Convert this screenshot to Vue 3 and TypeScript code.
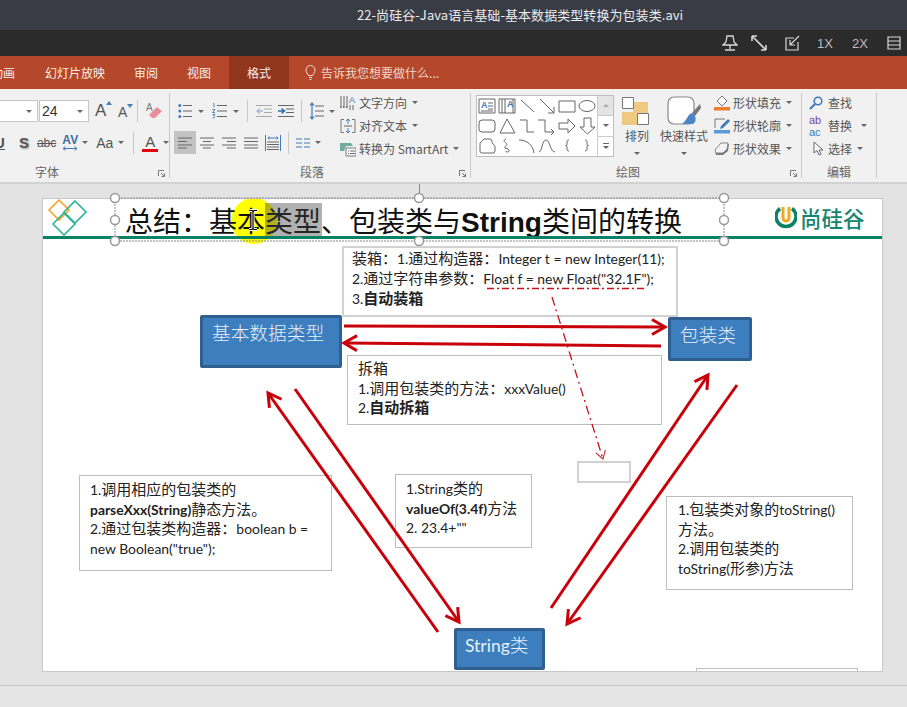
<script setup lang="ts">
interface Arrow { x1: number; y1: number; x2: number; y2: number }
const arrows: Arrow[] = [
  { x1: 344, y1: 326, x2: 665, y2: 327 },
  { x1: 661, y1: 346, x2: 344, y2: 343 },
  { x1: 438, y1: 632, x2: 268, y2: 393 },
  { x1: 295, y1: 389, x2: 459, y2: 622 },
  { x1: 551, y1: 608, x2: 708, y2: 375 },
  { x1: 737, y1: 385, x2: 567, y2: 624 },
]
const handles: [number, number][] = [
  [115, 198], [419, 198], [724, 198],
  [115, 220], [724, 220],
  [115, 241], [419, 241], [724, 241],
]
const shapes: string[] = [
  'M2 3h16v14H2z M11 7h5 M11 10h5 M11 13h5 M4 15h12',
  'M2 3h16v14H2z M5 3v14 M8 3v14 M16 3v14',
  'M4 4L17 16',
  'M3 3L17 17 M17 11v6h-6',
  'M2 5h16v11H2z',
  'M2 10a8 5.5 0 1 0 16 0a8 5.5 0 1 0-16 0z',
  'M5 4h10a3 3 0 0 1 3 3v6a3 3 0 0 1-3 3H5a3 3 0 0 1-3-3V7a3 3 0 0 1 3-3z',
  'M10 3L18 17H3z',
  'M3 4h7v12h7',
  'M1 4h7v12h9 M14 13l3 3l-3 3',
  'M2 7h9V3l7 7l-7 7v-4H2z',
  'M7 2h7v9h4l-7.500 7L3 11h4z',
  'M7 3h6c3 0 1 4 3 5c2 1 2 2 2 4v3a2 2 0 0 1-2 2H5a2 2 0 0 1-2-2V7z',
  'M9 3c-3 1-2 3 0 4c3 2-2 3-1 5c1 1 3 0 4 2c1 2-3 3-3 1',
  'M2 4c8 0 14 5 15 13',
  'M2 16c3 0 3-12 7-12c4 0 4 12 9 12',
  'M12 4c-2 0-2 1-2 2v2c0 1-.5 1.500-1.500 1.500c1 0 1.500.5 1.500 1.500v2c0 1 0 2 2 2',
  'M8 4c2 0 2 1 2 2v2c0 1 .5 1.500 1.500 1.500c-1 0-1.500.5-1.500 1.500v2c0 1 0 2-2 2',
]
</script>

<template>
  <div class="app">
    <div class="titlebar">22-尚硅谷-Java语言基础-基本数据类型转换为包装类.avi</div>

    <div class="playerbar">
      <svg class="pb-i" width="16" height="18" viewBox="0 0 16 18"><path d="M5 2h6l1 6l3 3H1l3-3z M8 11v4 M3 16h10" fill="none" stroke="#d8d8d8" stroke-width="1.300"/></svg>
      <svg class="pb-e" width="18" height="16" viewBox="0 0 18 16"><path d="M3 2l12 12 M2 1h5M2 1v5 M16 15h-5M16 15v-5" fill="none" stroke="#d8d8d8" stroke-width="1.600"/></svg>
      <svg class="pb-c" width="16" height="16" viewBox="0 0 16 16"><path d="M10 3H2v12h12V7 M15 1L6 10 M6 5v5h5" fill="none" stroke="#d8d8d8" stroke-width="1.200"/></svg>
      <span class="pb-t1">1X</span>
      <span class="pb-t2">2X</span>
      <svg class="pb-l" width="14" height="14" viewBox="0 0 14 14"><path d="M1 1h12v12H1z M1 5h12 M1 9h12" fill="none" stroke="#d8d8d8" stroke-width="1.200"/></svg>
    </div>

    <div class="tabs">
      <span class="tab t0">动画</span>
      <span class="tab t1">幻灯片放映</span>
      <span class="tab t2">审阅</span>
      <span class="tab t2">视图</span>
      <span class="tab active">格式</span>
      <svg class="bulb" width="11" height="15" viewBox="0 0 11 15"><path d="M3.500 10.500C2.500 8.500 1 7.500 1 5a4.500 4.500 0 0 1 9 0c0 2.500-1.500 3.500-2.500 5.500z M4 12.500h3 M4.500 14.500h2" fill="none" stroke="#f3dcd4" stroke-width="1"/></svg>
      <span class="tab tell">告诉我您想要做什么...</span>
    </div>

    <div class="ribbon">
      <section class="group g-font">
        <div class="body">
          <div class="row r1">
            <div class="combo c1"><i class="caret"></i></div>
            <div class="combo c2"><span>24</span><i class="caret"></i></div>
            <span class="ico a-up">A<svg width="6" height="4" viewBox="0 0 6 4"><path d="M0 4L3 0L6 4z" fill="#4a7fb5"/></svg></span>
            <span class="ico a-dn">A<svg width="6" height="4" viewBox="0 0 6 4"><path d="M0 0L3 4L6 0z" fill="#4a7fb5"/></svg></span>
            <i class="vsep s-a"></i>
            <svg class="eraser" width="17" height="18" viewBox="0 0 17 18"><text x="0" y="9" font-size="10" fill="#777" font-family="Liberation Sans">A</text><path d="M3 13L11 5l5 4l-7 7H6z" fill="#ea8e9c"/></svg>
          </div>
          <div class="row r2">
            <span class="u">U</span>
            <span class="s">S</span>
            <span class="abc">abc</span>
            <span class="av">AV<svg width="16" height="5" viewBox="0 0 16 5"><path d="M1 2.500h14 M3.500 0.500L1 2.500l2.500 2 M12.500 0.500l2.500 2l-2.500 2" fill="none" stroke="#3f7ab8" stroke-width="1"/></svg></span>
            <i class="caret cr1"></i>
            <span class="aa">Aa</span>
            <i class="caret cr2"></i>
            <i class="vsep s-b"></i>
            <span class="red-a">A</span>
            <i class="caret cr3"></i>
          </div>
        </div>
        <div class="label l-font">字体</div>
        <svg class="launcher" width="7" height="7" viewBox="0 0 7 7"><path d="M0.500 6V0.500H6 M3 3l3.500 3.500 M6.500 3.500v3h-3" fill="none" stroke="#777" stroke-width="1"/></svg>
      </section>

      <section class="group g-para">
        <div class="body para-body">
          <div class="para-left">
            <div class="row r1">
              <svg class="p-bul" width="14" height="16" viewBox="0 0 14 16"><path d="M5 2.500h9 M5 8h9 M5 13.500h9" stroke="#666"/><circle cx="1.800" cy="2.500" r="1.500" fill="#3f7ab8"/><circle cx="1.800" cy="8" r="1.500" fill="#3f7ab8"/><circle cx="1.800" cy="13.500" r="1.500" fill="#3f7ab8"/></svg>
              <i class="caret p-c1"></i>
              <svg class="p-num" width="15" height="16" viewBox="0 0 15 16"><path d="M5 2.500h10 M5 8h10 M5 13.500h10" stroke="#666"/><path d="M1 1l1-.5v4 M.5 6.500h2.500l-2.500 3h2.500 M.5 11.500h2.500l-1.500 1.500c1.500 0 1.500 2.500-1 2" fill="none" stroke="#3f7ab8" stroke-width=".9"/></svg>
              <i class="caret p-c2"></i>
              <i class="vsep p-s1"></i>
              <svg class="p-dec" width="17" height="14" viewBox="0 0 17 14"><path d="M0 1.500h16 M8 5h8 M8 8.500h8 M0 12.500h16" stroke="#aaa"/><path d="M7 7H1 M4 4.500L1 7l3 2.500" fill="none" stroke="#a6bcd4" stroke-width="1.300"/></svg>
              <svg class="p-inc" width="17" height="14" viewBox="0 0 17 14"><path d="M0 1.500h16 M8 5h8 M8 8.500h8 M0 12.500h16" stroke="#666"/><path d="M0 7h6 M3.500 4.500L6.500 7l-3 2.500" fill="none" stroke="#2d6cab" stroke-width="1.500"/></svg>
              <i class="vsep p-s2"></i>
              <svg class="p-ls" width="15" height="18" viewBox="0 0 15 18"><path d="M6 4h9 M6 9h9 M6 14h9" stroke="#666"/><path d="M3 1v16 M1 3.500L3 1l2 2.500 M1 14.500L3 17l2-2.500" fill="none" stroke="#3f7ab8" stroke-width="1.200"/></svg>
              <i class="caret p-c3"></i>
            </div>
            <div class="row r2">
              <div class="sel-align"><svg width="14" height="12" viewBox="0 0 14 12"><path d="M0 1h14 M0 4.500h9 M0 8h14 M0 11h9" stroke="#666"/></svg></div>
              <svg class="al1" width="14" height="12" viewBox="0 0 14 12"><path d="M0 1h14 M3 4.500h8 M0 8h14 M3 11h8" stroke="#666"/></svg>
              <svg class="al2" width="14" height="12" viewBox="0 0 14 12"><path d="M0 1h14 M5 4.500h9 M0 8h14 M5 11h9" stroke="#666"/></svg>
              <svg class="al3" width="14" height="12" viewBox="0 0 14 12"><path d="M0 1h14 M0 4.500h14 M0 8h14 M0 11h14" stroke="#666"/></svg>
              <svg class="al4" width="16" height="16" viewBox="0 0 16 16"><path d="M.5 0v16 M15.500 0v16" stroke="#3f7ab8"/><path d="M3 3h10 M4.500 1.500L3 3l1.500 1.500 M11.500 1.500L13 3l-1.500 1.500" fill="none" stroke="#3f7ab8"/><path d="M2 7h12 M2 9.500h12 M2 12h12 M2 14.500h12" stroke="#666"/></svg>
              <i class="vsep p-s3"></i>
              <svg class="al5" width="14" height="10" viewBox="0 0 14 10"><path d="M0 1h6 M8 1h6 M0 5h6 M8 5h6 M0 9h6 M8 9h6" stroke="#3f7ab8" stroke-width="1.100"/></svg>
              <i class="caret p-c4"></i>
            </div>
          </div>
          <div class="txt-col">
            <div class="txt-row">
              <svg width="16" height="16" viewBox="0 0 16 16"><path d="M1 1v12 M4 1v12 M7 1v12 M1 13l-1-2 M4 13l-1-2 M7 13l-1-2" fill="none" stroke="#666"/><text x="9" y="8" font-size="9" fill="#3f7ab8" font-family="Liberation Sans">A</text><path d="M10 10v5 M13 10v5" stroke="#666"/></svg>
              <span class="rt">文字方向</span><i class="caret"></i>
            </div>
            <div class="txt-row">
              <svg width="16" height="16" viewBox="0 0 16 16"><path d="M4 1.500H1v13h3 M12 1.500h3v13h-3" fill="none" stroke="#777"/><path d="M8 1v5 M6 3l2-2l2 2 M8 15v-5 M6 13l2 2l2-2" fill="none" stroke="#3f7ab8"/><path d="M4 8h8" stroke="#666"/></svg>
              <span class="rt">对齐文本</span><i class="caret"></i>
            </div>
            <div class="txt-row">
              <svg width="16" height="16" viewBox="0 0 16 16"><path d="M0 2h11l2 3H6l-2 5H0z" fill="#6fae9b"/><path d="M6 7h10v8H6z" fill="#fff" stroke="#777"/><path d="M8 10h1 M8 12.500h1 M10 10h5 M10 12.500h5" stroke="#666"/></svg>
              <span class="rt">转换为 SmartArt</span><i class="caret"></i>
            </div>
          </div>
        </div>
        <div class="label l-para">段落</div>
        <svg class="launcher" width="7" height="7" viewBox="0 0 7 7"><path d="M0.500 6V0.500H6 M3 3l3.500 3.500 M6.500 3.500v3h-3" fill="none" stroke="#777" stroke-width="1"/></svg>
      </section>

      <section class="group g-draw">
        <div class="body draw-body">
          <div class="gallery">
            <div class="shape-grid">
              <svg v-for="(d, i) in shapes" :key="i" class="shape" width="20" height="20" viewBox="0 0 20 20"><path :d="d" fill="none" stroke="#666" stroke-width="1"/><text v-if="i === 0" x="4" y="12" font-size="9" font-weight="700" fill="#3f7ab8" font-family="Liberation Sans">A</text><text v-if="i === 1" x="10" y="11" font-size="9" font-weight="700" fill="#3f7ab8" font-family="Liberation Sans">A</text></svg>
            </div>
            <div class="gal-btns">
              <div class="gb off"><i class="tri-up"></i></div>
              <div class="gb"><i class="caret"></i></div>
              <div class="gb"><i class="more"></i><i class="caret"></i></div>
            </div>
          </div>
          <div class="big b-arr">
            <svg width="30" height="28" viewBox="0 0 30 28"><path d="M11 5h15v14H11z M0 15h15v13H0z" fill="#efc982"/><path d="M.5.500h11v11H.500z M15.500 16.500h11v11h-11z" fill="#fff" stroke="#777"/></svg>
            <span class="bt">排列</span><i class="caret"></i>
          </div>
          <div class="big b-quick">
            <svg width="34" height="30" viewBox="0 0 34 30"><rect x="1" y="1" width="26" height="27" rx="6" fill="#fff" stroke="#888" stroke-width="1.200"/><path d="M33 8l-8 9l3 3l6-8z" fill="#777"/><path d="M25 17c-5 2-4 6-10 11h11c3-2 3-5 2-8z" fill="#4a86c5"/></svg>
            <span class="bt">快速样式</span><i class="caret"></i>
          </div>
          <div class="txt-col fx-col">
            <div class="txt-row">
              <svg width="16" height="16" viewBox="0 0 16 16"><path d="M8 1l5 5l-5 5l-5-5z" fill="#fff" stroke="#777"/><path d="M0 12h16v3.500H0z" fill="#ed7d31"/></svg>
              <span class="rt">形状填充</span><i class="caret"></i>
            </div>
            <div class="txt-row">
              <svg width="16" height="16" viewBox="0 0 16 16"><path d="M1 10V1h10" fill="none" stroke="#777"/><path d="M14 1l2 2l-7 7l-3 1l1-3z" fill="#3f7ab8"/><path d="M0 12h16v3.500H0z" fill="#5b9bd5"/></svg>
              <span class="rt">形状轮廓</span><i class="caret"></i>
            </div>
            <div class="txt-row">
              <svg width="16" height="16" viewBox="0 0 16 16"><path d="M1 10L7 3h8l-1 7l-5 4H2z" fill="#777"/><path d="M1 9L7 2h7l-1 6l-4 4H2z" fill="#f4f4f4" stroke="#888"/></svg>
              <span class="rt">形状效果</span><i class="caret"></i>
            </div>
          </div>
        </div>
        <div class="label l-draw">绘图</div>
        <svg class="launcher" width="7" height="7" viewBox="0 0 7 7"><path d="M0.500 6V0.500H6 M3 3l3.500 3.500 M6.500 3.500v3h-3" fill="none" stroke="#777" stroke-width="1"/></svg>
      </section>

      <section class="group g-edit">
        <div class="body">
          <div class="txt-col edit-col">
            <div class="txt-row">
              <svg width="14" height="14" viewBox="0 0 14 14"><circle cx="9" cy="5" r="3.800" fill="none" stroke="#3f7ab8" stroke-width="1.600"/><path d="M6 8L1 13" stroke="#3f7ab8" stroke-width="2.200"/></svg>
              <span class="rt e-t">查找</span>
            </div>
            <div class="txt-row">
              <span class="abac"><b>ab</b><em>ac</em></span>
              <span class="rt e-t2">替换</span><i class="caret e-c1"></i>
            </div>
            <div class="txt-row">
              <svg class="e-cur" width="11" height="15" viewBox="0 0 11 15"><path d="M1 1v11l3-2.500l2 4.500l2-1l-2-4h4z" fill="#fff" stroke="#666"/></svg>
              <span class="rt e-t3">选择</span><i class="caret"></i>
            </div>
          </div>
        </div>
        <div class="label l-edit">编辑</div>
      </section>
    </div>

    <div class="workspace">
      <div class="slide">
        <div class="spot"></div>
        <svg class="logo" width="44" height="38" viewBox="0 0 44 38"><path d="M14 2l10 10l-10 10L4 12z" fill="none" stroke="#f5a623" stroke-width="1.600"/><path d="M30 4l11 11l-11 11l-11-11z M19 16l11 11l-11 11L8 27z" fill="none" stroke="#2bb39a" stroke-width="1.600" transform="translate(0 -1)"/></svg>
        <div class="slide-title">总结：基本类型、包装类与<b>String</b>类间的转换</div>
        <div class="selection"></div>
        <svg class="ibeam" width="10" height="22" viewBox="0 0 10 22"><path d="M1 1.500h3l1 1l1-1h3 M5 2.500v17 M1 20.500h3l1-1l1 1h3" fill="none" stroke="#fff" stroke-width="3"/><path d="M1 1.500h3l1 1l1-1h3 M5 2.500v17 M1 20.500h3l1-1l1 1h3" fill="none" stroke="#000" stroke-width="1.200"/></svg>
        <div class="brand">
          <svg width="22" height="24" viewBox="0 0 22 24"><path d="M5 2.500a10 10 0 1 0 12 0" fill="none" stroke="#0b8265" stroke-width="3.500"/><path d="M8 1v11a3 3 0 0 0 6 0V1" fill="none" stroke="#f0a81e" stroke-width="3"/></svg>
          <span>尚硅谷</span>
        </div>
        <div class="rule"></div>

        <div class="tb tb-box">
          <span class="ln">装箱：<span class="en">1.</span>通过构造器：<span class="en">Integer t = new Integer(11);</span></span>
          <span class="ln"><span class="en">2.</span>通过字符串参数：<span class="en">Float f = new Float("32.1F");</span></span>
          <span class="ln"><span class="en">3.</span><b>自动装箱</b></span>
        </div>
        <div class="tb tb-unbox">
          <span class="ln">拆箱</span>
          <span class="ln"><span class="en">1.</span>调用包装类的方法：<span class="en">xxxValue()</span></span>
          <span class="ln"><span class="en">2.</span><b>自动拆箱</b></span>
        </div>
        <div class="tb tb-left">
          <span class="ln"><span class="en">1.</span>调用相应的包装类的</span>
          <span class="ln"><b class="en">parseXxx(String)</b>静态方法。</span>
          <span class="ln"><span class="en">2.</span>通过包装类构造器：<span class="en">boolean b =</span></span>
          <span class="ln"><span class="en">new Boolean("true");</span></span>
        </div>
        <div class="tb tb-mid">
          <span class="ln"><span class="en">1.String</span>类的</span>
          <span class="ln"><b class="en">valueOf(3.4f)</b>方法</span>
          <span class="ln"><span class="en">2. 23.4+""</span></span>
        </div>
        <div class="tb tb-right">
          <span class="ln"><span class="en">1.</span>包装类对象的<span class="en">toString()</span></span>
          <span class="ln">方法。</span>
          <span class="ln"><span class="en">2.</span>调用包装类的</span>
          <span class="ln"><span class="en">toString(</span>形参<span class="en">)</span>方法</span>
        </div>
        <div class="tb tb-small"></div>
        <div class="tb tb-cut"></div>

        <div class="node n-basic">基本数据类型</div>
        <div class="node n-wrap">包装类</div>
        <div class="node n-str"><span class="str-en">String</span>类</div>

        <svg class="flow" width="841" height="474" viewBox="42 198 841 474">
          <defs>
            <marker id="head" markerUnits="userSpaceOnUse" markerWidth="18" markerHeight="20" refX="15" refY="9" orient="auto"><path d="M2 1.500L15 9L2 16.500" fill="none" stroke="#c8000a" stroke-width="3"/></marker>
            <marker id="thin" markerUnits="userSpaceOnUse" markerWidth="12" markerHeight="12" refX="9" refY="6" orient="auto"><path d="M1 1L9 6L1 11" fill="none" stroke="#c0202a" stroke-width="1"/></marker>
          </defs>
          <line v-for="(a, i) in arrows" :key="i" :x1="a.x1" :y1="a.y1" :x2="a.x2" :y2="a.y2" stroke="#c8000a" stroke-width="3" marker-end="url(#head)"/>
          <path d="M487 288.500H646" fill="none" stroke="#c8101a" stroke-width="1.300" stroke-dasharray="7 3 2 3"/>
          <path d="M552 297L603 459" fill="none" stroke="#c8101a" stroke-width="1.300" stroke-dasharray="9 4 2 4" marker-end="url(#thin)"/>
        </svg>
      </div>

      <svg class="frame" width="907" height="60" viewBox="0 184 907 60">
        <path d="M115 198H724V241H115z" fill="none" stroke="#888" stroke-width="1" stroke-dasharray="2 1"/>
        <path d="M419.500 184V198" stroke="#888"/>
        <circle v-for="(h, i) in handles" :key="i" :cx="h[0]" :cy="h[1]" r="4.500" fill="#fff" stroke="#999" stroke-width="1.500"/>
      </svg>
    </div>

    <div class="statusbar"></div>
  </div>
</template>

<style>
html, body { margin: 0; background: #e3e3e3; }
</style>

<style scoped>
.app { width: 907px; height: 707px; overflow: hidden; font-family: "Noto Sans CJK SC", "Liberation Sans", sans-serif; color: #444; }
.titlebar { height: 30px; background: #393c45; color: #ececec; font-size: 13px; line-height: 30px; padding-left: 357px; box-sizing: border-box; white-space: nowrap; letter-spacing: .06px; }
.playerbar { height: 26px; background: #2b2b2b; display: flex; align-items: center; justify-content: flex-end; padding-right: 6px; color: #bdbdbd; font: 13px "Liberation Sans", sans-serif; }
.pb-e { margin-left: 12px; }
.pb-c { margin-left: 16px; }
.pb-t1 { margin-left: 17px; width: 17px; }
.pb-t2 { margin-left: 18px; width: 17px; }
.pb-l { margin-left: 18px; }

.tabs { height: 33px; background: #b5472a; display: flex; align-items: center; color: #fbeee9; font-size: 12px; white-space: nowrap; }
.tab { line-height: 33px; }
.t0 { margin-left: -9px; }
.t1 { margin-left: 30px; }
.t2 { margin-left: 29px; }
.active { margin-left: 18px; width: 60px; text-align: center; background: #90361f; }
.bulb { margin-left: 16px; }
.tell { margin-left: 5px; color: #f2d5cb; }

.ribbon { height: 85px; padding: 4px 0; background: #f1f1f1; border-bottom: 2px solid #d2d2d2; display: flex; font-size: 12px; }
.group { position: relative; box-sizing: border-box; border-right: 1px solid #c8c8c8; display: flex; flex-direction: column; }
.g-font { width: 170px; }
.g-para { width: 301px; }
.g-draw { width: 331px; }
.g-edit { width: 75px; }
.body { height: 72px; }
.label { height: 13px; line-height: 14px; color: #666; }
.l-font { margin-left: 35px; }
.l-para { margin-left: 130px; }
.l-draw { margin-left: 145px; }
.l-edit { margin-left: 25px; }
.launcher { position: absolute; right: 4px; bottom: 1px; }

.row { display: flex; align-items: center; }
.r1 { height: 22px; margin-top: 7px; }
.r2 { height: 23px; margin-top: 9px; }
.combo { box-sizing: border-box; height: 22px; background: #fff; border: 1px solid #c6c6c6; display: flex; align-items: center; justify-content: flex-end; padding-right: 5px; }
.c1 { width: 39px; margin-left: -1px; margin-right: 1px; }
.c2 { width: 50px; justify-content: space-between; padding-left: 2px; font: 14px "Liberation Sans", sans-serif; color: #333; }
.caret { display: inline-block; width: 0; height: 0; flex: none; border-left: 3px solid transparent; border-right: 3px solid transparent; border-top: 3px solid #666; }
.ico { display: flex; align-items: flex-start; font: 16px "Liberation Sans", sans-serif; color: #555; }
.a-up { margin-left: 6px; width: 21px; font-size: 17px; }
.a-dn { margin-left: 2px; width: 19px; font-size: 14px; padding-top: 2px; }
.vsep { display: block; flex: none; width: 1px; height: 22px; background: #c9c9c9; }
.eraser { margin-left: 8px; }
.u, .s, .abc, .av, .aa, .red-a { font-family: "Liberation Sans", sans-serif; color: #555; }
.u { width: 5px; font-size: 15px; font-weight: 700; text-decoration: underline; direction: rtl; overflow: hidden; }
.s { margin-left: 14px; font-size: 15px; font-weight: 700; text-shadow: 1px 1px 2px #999; }
.abc { margin-left: 8px; font-size: 12px; text-decoration: line-through; }
.av { margin-left: 6px; font-size: 12px; font-weight: 700; line-height: 12px; display: flex; flex-direction: column; align-items: center; color: #3f6f9f; }
.cr1 { margin-left: 4px; }
.aa { margin-left: 8px; font-size: 14px; }
.cr2 { margin-left: 5px; }
.s-b { margin-left: 9px; }
.red-a { margin-left: 8px; width: 16px; font-size: 15px; text-align: center; line-height: 15px; border-bottom: 3px solid #e8000b; }
.cr3 { margin-left: 5px; }

.para-body { display: flex; }
.para-left { width: 170px; }
.p-bul { margin-left: 8px; }
.p-c1 { margin-left: 6px; }
.p-num { margin-left: 8px; }
.p-c2 { margin-left: 6px; }
.p-s1 { margin-left: 8px; }
.p-dec { margin-left: 8px; }
.p-inc { margin-left: 5px; }
.p-s2 { margin-left: 6px; }
.p-ls { margin-left: 7px; }
.p-c3 { margin-left: 5px; }
.sel-align { box-sizing: border-box; margin-left: 4px; width: 22px; height: 23px; background: #c3c3c3; display: flex; align-items: center; justify-content: center; }
.al1 { margin-left: 4px; }
.al2 { margin-left: 8px; }
.al3 { margin-left: 8px; }
.al4 { margin-left: 7px; }
.p-s3 { margin-left: 7px; }
.al5 { margin-left: 7px; }
.p-c4 { margin-left: 5px; }

.txt-col { display: flex; flex-direction: column; margin-top: -2px; }
.txt-row { height: 23px; display: flex; align-items: center; white-space: nowrap; }
.txt-row .rt { margin-left: 3px; margin-right: 5px; font-size: 12px; color: #555; }

.draw-body { display: flex; }
.gallery { box-sizing: border-box; margin: 2px 0 0 5px; width: 138px; height: 62px; border: 1px solid #bdbdbd; background: #fff; display: flex; }
.shape-grid { width: 120px; display: grid; grid-template-columns: repeat(6, 20px); grid-auto-rows: 20px; }
.gal-btns { width: 16px; border-left: 1px solid #ccc; display: flex; flex-direction: column; }
.gb { flex: 1; display: flex; flex-direction: column; align-items: center; justify-content: center; border-bottom: 1px solid #ccc; gap: 2px; }
.gb:last-child { border-bottom: 0; }
.off { background: #e4e4e4; }
.tri-up { width: 0; height: 0; border-left: 3px solid transparent; border-right: 3px solid transparent; border-bottom: 3px solid #aaa; }
.more { width: 6px; height: 1px; background: #666; }
.big { display: flex; flex-direction: column; align-items: center; padding-top: 4px; color: #555; }
.big .caret { margin-top: 8px; }
.bt { margin-top: 3px; font-size: 12px; line-height: 16px; white-space: nowrap; }
.b-arr { margin-left: 8px; width: 30px; }
.b-quick { margin-left: 7px; width: 50px; padding-top: 3px; }
.b-quick .bt { margin-top: 2px; }
.fx-col { margin-left: 5px; }
.edit-col { padding-left: 7px; }
.e-t { margin-left: 5px !important; }
.abac { display: flex; flex-direction: column; width: 16px; font: 11px/12px "Liberation Sans", sans-serif; }
.abac b { font-weight: 400; color: #7a3fa0; }
.abac em { font-style: normal; color: #3f7ab8; }
.e-t2 { margin-left: 3px !important; margin-right: 9px !important; }
.e-cur { margin-left: 4px; }
.e-t3 { margin-left: 4px !important; }

.workspace { position: relative; height: 501px; box-sizing: border-box; padding: 14px 0 0 42px; background: #e3e3e3; }
.frame { position: absolute; left: 0; top: 0; overflow: visible; }
.slide { position: relative; box-sizing: border-box; width: 841px; height: 474px; background: #fff; border: 1px solid #c8c8c8; overflow: hidden; color: #222; }
.spot { position: absolute; left: 188px; top: -1px; width: 46px; height: 46px; border-radius: 50%; background: #ffff00; }
.logo { position: absolute; left: 2px; top: -1px; }
.slide-title { position: absolute; left: 82px; top: 1px; font-size: 28px; line-height: 40px; color: #111; white-space: nowrap; }
.slide-title b { font-family: "Liberation Sans", sans-serif; }
.selection { position: absolute; left: 222px; top: 4px; width: 57px; height: 35px; background: rgba(70, 70, 70, .42); }
.ibeam { position: absolute; left: 205px; top: 10px; }
.brand { position: absolute; left: 732px; top: 7px; display: flex; align-items: center; gap: 3px; color: #14866d; font-size: 21.500px; font-weight: 500; line-height: 24px; white-space: nowrap; }
.rule { position: absolute; left: 0; right: 0; top: 37px; height: 3px; background: #0b8265; }

.tb { position: absolute; box-sizing: border-box; background: #fff; border: 1px solid #bdbdbd; white-space: nowrap; padding: 2px 0 0 10px; font-family: "Noto Sans CJK SC", sans-serif; font-size: 15px; }
.ln { display: block; height: 19.500px; line-height: 19.500px; }
.en { font-family: Lato, sans-serif; font-size: 13.900px; }
.tb b { font-weight: 700; }
.tb b.en { font-family: Lato, sans-serif; }
.tb-box { left: 299px; top: 47px; width: 336px; height: 71px; border-width: 2px; border-color: #d2d2d2; padding: 0 0 0 8px; }
.tb-box .ln { height: 20px; line-height: 20px; }
.tb-unbox { left: 304px; top: 156px; width: 315px; height: 70px; }
.tb-left { left: 36px; top: 276px; width: 253px; height: 96px; padding-top: 3px; }
.tb-mid { left: 352px; top: 275px; width: 137px; height: 74px; padding-top: 3px; }
.tb-right { left: 623px; top: 297px; width: 187px; height: 94px; padding-left: 11px; }
.tb-small { left: 534px; top: 262px; width: 54px; height: 22px; border-width: 2px; border-color: #d2d2d2; }
.tb-cut { left: 653px; top: 469px; width: 162px; height: 30px; }

.node { position: absolute; box-sizing: border-box; background: #3d7ebf; border: 3px solid #2f5f90; border-radius: 2px; color: #e9f0f7; font-size: 18.700px; line-height: 24px; white-space: nowrap; font-weight: 300; }
.n-basic { left: 157px; top: 116px; width: 142px; height: 53px; padding: 2px 0 0 9px; }
.n-wrap { left: 625px; top: 118px; width: 84px; height: 44px; padding: 2px 0 0 9px; }
.n-str { left: 411px; top: 429px; width: 91px; height: 42px; padding: 1px 0 0 8px; }
.str-en { font-family: Lato, sans-serif; font-size: 17.500px; font-weight: 400; }
.flow { position: absolute; left: -1px; top: -1px; }

.statusbar { box-sizing: border-box; height: 22px; background: #e5e5e5; border-top: 1px solid #c6c6c6; }
</style>
